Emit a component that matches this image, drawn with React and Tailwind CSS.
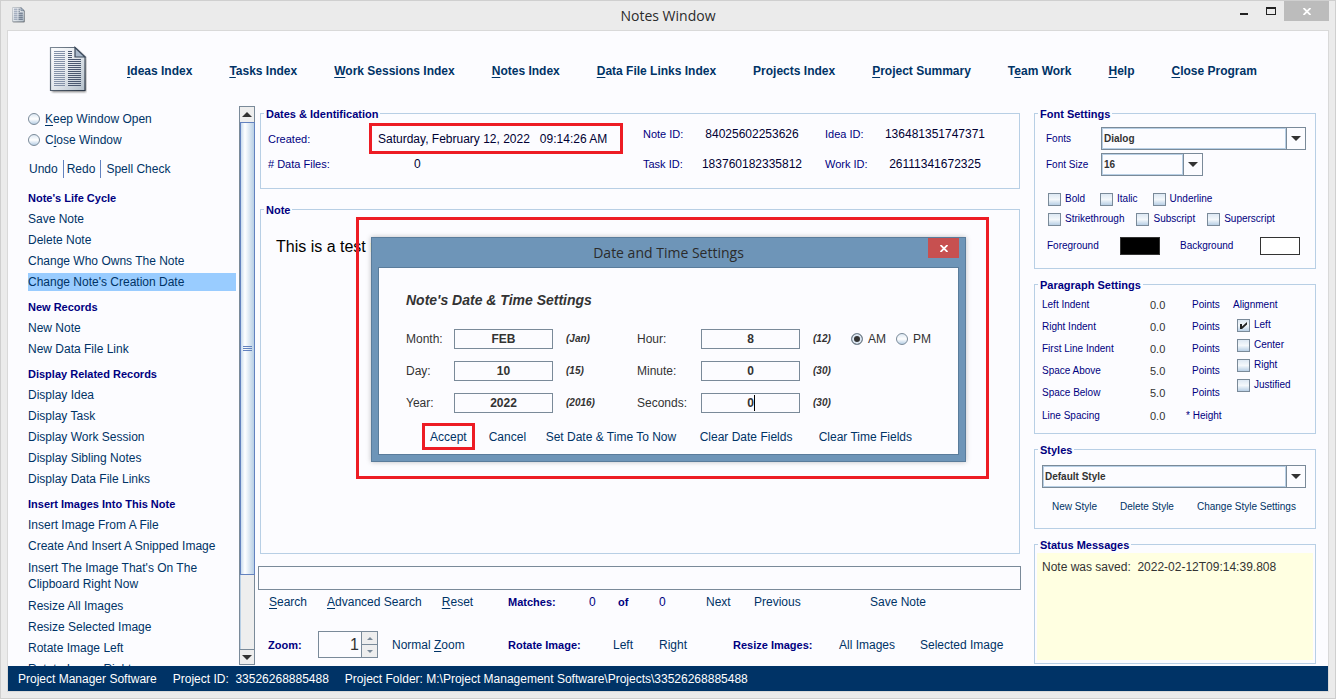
import React, { useState } from "react";

const menuItems = [
  { label: "Ideas Index", key: 0 },
  { label: "Tasks Index", key: 0 },
  { label: "Work Sessions Index", key: 0 },
  { label: "Notes Index", key: 0 },
  { label: "Data File Links Index", key: 0 },
  { label: "Projects Index", key: -1 },
  { label: "Project Summary", key: 0 },
  { label: "Team Work", key: 1 },
  { label: "Help", key: 0 },
  { label: "Close Program", key: 0 },
];

const sideSections = [
  {
    title: "Note's Life Cycle",
    links: [
      "Save Note",
      "Delete Note",
      "Change Who Owns The Note",
      "Change Note's Creation Date",
    ],
  },
  { title: "New Records", links: ["New Note", "New Data File Link"] },
  {
    title: "Display Related Records",
    links: [
      "Display Idea",
      "Display Task",
      "Display Work Session",
      "Display Sibling Notes",
      "Display Data File Links",
    ],
  },
  {
    title: "Insert Images Into This Note",
    links: [
      "Insert Image From A File",
      "Create And Insert A Snipped Image",
      "Insert The Image That's On The Clipboard Right Now",
      "Resize All Images",
      "Resize Selected Image",
      "Rotate Image Left",
      "Rotate Image Right",
    ],
  },
];

const paragraphRows = [
  ["Left Indent", "0.0", "Points"],
  ["Right Indent", "0.0", "Points"],
  ["First Line Indent", "0.0", "Points"],
  ["Space Above", "5.0", "Points"],
  ["Space Below", "5.0", "Points"],
];

// Text with one underlined shortcut letter
function Mnemonic({ text, at = 0 }) {
  if (at < 0) return text;
  return (
    <>
      {text.slice(0, at)}
      <span className="underline underline-offset-2">{text[at]}</span>
      {text.slice(at + 1)}
    </>
  );
}

// step is the distance between the printed lines, small icons need a wider one
function DocIcon({ className, step = 2 }) {
  const lines = [];
  for (let y = 5; y < 40; y += step) lines.push(y);

  return (
    <svg viewBox="0 0 38 48" className={className} aria-hidden="true">
      <defs>
        <linearGradient id="page" x1="0" y1="0" x2="1" y2="1">
          <stop offset="0" stopColor="#fdfdfe" />
          <stop offset="0.5" stopColor="#e3e8ed" />
          <stop offset="1" stopColor="#b3bfca" />
        </linearGradient>
        <linearGradient id="edge" x1="0" y1="0" x2="1" y2="1">
          <stop offset="0" stopColor="#7d8996" />
          <stop offset="1" stopColor="#2b3747" />
        </linearGradient>
        <filter id="soft" x="-20%" y="-20%" width="140%" height="140%">
          <feGaussianBlur stdDeviation="0.8" />
        </filter>
      </defs>
      <path
        d="M3 3h24l10 9v34H3z"
        fill="#222"
        opacity="0.6"
        filter="url(#soft)"
      />
      <path
        d="M1.5 1.5h24.500l10 9.500v33.500H1.500z"
        fill="url(#page)"
        stroke="url(#edge)"
        strokeWidth="1.200"
      />
      {lines.map((y) => (
        <g key={y} shapeRendering={step === 2 ? "crispEdges" : "auto"}>
          <rect x="5" y={y} width="11" height={step / 2} fill="#8391a8" />
          <rect
            x="19"
            y={y}
            width={y < 12 ? 4 : 13}
            height={step / 2}
            fill="#4a5870"
          />
        </g>
      ))}
      <path
        d="M26 1.500v9.500h10z"
        fill="#a9b9cb"
        stroke="#3c4a5c"
        strokeWidth="1.200"
      />
    </svg>
  );
}

function CloseGlyph() {
  return (
    <svg viewBox="0 0 8 7" className="w-2 h-[7px]" aria-hidden="true">
      <path d="M0.500 0L7.500 7M7.500 0L0.500 7" stroke="#fff" strokeWidth="1.800" />
    </svg>
  );
}

function Arrow({ up, small, color = "#333" }) {
  return (
    <svg
      viewBox="0 0 10 5"
      className={small ? "w-[6px] h-[3px]" : "w-[10px] h-[5px]"}
      aria-hidden="true"
    >
      <path d={up ? "M0 5L5 0L10 5z" : "M0 0h10L5 5z"} fill={color} />
    </svg>
  );
}

function Group({ title, className = "", children }) {
  return (
    <fieldset className={`border border-[#b8cfe5] min-w-0 ${className}`}>
      <legend className="ml-[3px] px-[2px] h-[18px] leading-5 text-[11px] font-bold text-[#000080]">
        {title}
      </legend>
      {children}
    </fieldset>
  );
}

function LinkButton({ className = "", children }) {
  return (
    <button
      type="button"
      className={`text-left whitespace-nowrap text-[#003366] ${className}`}
    >
      {children}
    </button>
  );
}

function Radio({ name, label, className = "", defaultChecked }) {
  return (
    <label className={`flex items-center gap-[5px] ${className}`}>
      <input
        type="radio"
        name={name}
        defaultChecked={defaultChecked}
        className="appearance-none w-3 h-3 rounded-full border border-[#7a8a99] bg-linear-to-b from-[#dde8f3] via-white to-[#b8cfe5] checked:bg-none checked:bg-[#333] checked:shadow-[inset_0_0_0_2px_#dde8f3]"
      />
      <span>{label}</span>
    </label>
  );
}

function CheckBox({ label, defaultChecked }) {
  return (
    <label className="flex items-center gap-1 text-[#000080]">
      <span className="relative flex">
        <input
          type="checkbox"
          defaultChecked={defaultChecked}
          className="peer appearance-none w-[13px] h-[13px] border border-[#7a8a99] bg-linear-to-b from-[#dde8f3] via-[#f4f8fb] to-[#b8cfe5]"
        />
        <svg
          viewBox="0 0 13 13"
          className="absolute inset-0 hidden peer-checked:block pointer-events-none"
          aria-hidden="true"
        >
          <path d="M3 5h2v2.500l5-4.500v2.500L5 10H3z" fill="#222" />
        </svg>
      </span>
      {label}
    </label>
  );
}

function ComboBox({ id, label, options, className = "" }) {
  return (
    <div className={`flex h-[23px] border border-[#7a8a99] ${className}`}>
      <select
        id={id}
        aria-label={label}
        className="appearance-none flex-1 min-w-0 border border-[#b8cfe5] px-px text-[10px] font-bold text-[#333]"
      >
        {options.map((o) => (
          <option key={o}>{o}</option>
        ))}
      </select>
      <span className="w-[19px] border-l border-[#7a8a99] flex items-center justify-center pointer-events-none">
        <Arrow />
      </span>
    </div>
  );
}

function Sidebar() {
  const [selected, setSelected] = useState("Change Note's Creation Date");

  return (
    <div className="flex w-[247px] shrink-0 pl-5">
      <div className="flex-1 min-w-0 overflow-hidden pt-[6px] mr-[3px] text-[#003366]">
        <Radio
          name="window"
          label={<Mnemonic text="Keep Window Open" />}
          className="h-[18px] mb-[3px]"
        />
        <Radio
          name="window"
          label={<Mnemonic text="Close Window" at={1} />}
          className="h-[18px]"
        />
        <div className="flex h-[18px] mt-[11px] mb-[11px]">
          <LinkButton className="pl-px pr-[5px]">Undo</LinkButton>
          <LinkButton className="border-l border-[#6382bf] pl-[3px] pr-[5px]">
            Redo
          </LinkButton>
          <LinkButton className="border-l border-[#6382bf] pl-[5px]">
            Spell Check
          </LinkButton>
        </div>
        {sideSections.map((section) => (
          <div key={section.title} className="mb-[7px]">
            <h2 className="h-[18px] mb-[3px] leading-[18px] text-[11px] font-bold text-[#000080]">
              {section.title}
            </h2>
            <ul className="flex flex-col gap-[3px]">
              {section.links.map((link) => (
                <li key={link}>
                  <button
                    type="button"
                    onClick={() => setSelected(link)}
                    className={`block w-full text-left ${
                      link.length > 40 ? "py-[2px] pr-6 leading-4" : "leading-[18px]"
                    } ${selected === link ? "bg-[#99ccff]" : ""}`}
                  >
                    {link}
                  </button>
                </li>
              ))}
            </ul>
          </div>
        ))}
      </div>

      {/* Scroll bar */}
      <div className="w-4 mt-[2px] mb-px flex flex-col border border-[#7a8a99] bg-[#eee]">
        <button
          type="button"
          aria-label="Scroll up"
          className="h-[15px] flex items-center justify-center"
        >
          <Arrow up />
        </button>
        <div className="flex-1 min-h-0 border-l border-[#b8cfe5]">
          <div className="h-[86%] -mx-px border border-[#6382bf] bg-linear-to-r from-[#c8dbee] via-white via-30% to-[#b8cfe5] flex flex-col items-center justify-center gap-px">
            <span className="w-[9px] h-px bg-[#6382bf]" />
            <span className="w-[9px] h-px bg-[#6382bf]" />
            <span className="w-[9px] h-px bg-[#6382bf]" />
          </div>
        </div>
        <button
          type="button"
          aria-label="Scroll down"
          className="h-[15px] border-t border-[#7a8a99] flex items-center justify-center"
        >
          <Arrow />
        </button>
      </div>
    </div>
  );
}

function NoteColumn() {
  return (
    <div className="flex-1 min-w-0 flex flex-col ml-[3px]">
      <Group title="Dates & Identification" className="h-[85px] ml-[2px] mr-px">
        <div className="flex pl-[7px] text-[#000033]">
          <div className="grid grid-cols-[101px_254px] grid-rows-[31px_20px] items-center mt-px">
            <span className="text-[11px] text-[#000080]">Created:</span>
            <span className="h-full flex items-center border-3 border-[#ed1c24] pl-[6px] whitespace-pre">
              {"Saturday, February 12, 2022   09:14:26 AM"}
            </span>
            <span className="text-[11px] text-[#000080]"># Data Files:</span>
            <span className="pl-[45px]">0</span>
          </div>
          <div className="grid grid-cols-[50px_118px_64px_120px] auto-rows-[24px] gap-y-[6px] items-center ml-5">
            <span className="text-[11px] text-[#000080]">Note ID:</span>
            <span className="text-center">84025602253626</span>
            <span className="pl-[14px] text-[11px] text-[#000080]">Idea ID:</span>
            <span className="text-center">136481351747371</span>
            <span className="text-[11px] text-[#000080]">Task ID:</span>
            <span className="text-center">183760182335812</span>
            <span className="pl-[14px] text-[11px] text-[#000080]">Work ID:</span>
            <span className="text-center">26111341672325</span>
          </div>
        </div>
      </Group>

      <Group title="Note" className="flex-1 ml-[2px] mr-px mt-[11px]">
        <textarea
          aria-label="Note text"
          defaultValue="This is a test note"
          className="block w-full h-full resize-none outline-none px-[15px] pt-5 text-base leading-[18px] text-black"
        />
      </Group>

      <input
        type="text"
        aria-label="Search text"
        className="h-6 mt-3 border border-[#7a8a99] px-1 outline-none"
      />

      <div className="flex items-center h-[18px] mt-[3px] pl-[11px]">
        <div className="flex w-[239px] gap-5">
          <LinkButton>
            <Mnemonic text="Search" />
          </LinkButton>
          <LinkButton>
            <Mnemonic text="Advanced Search" />
          </LinkButton>
          <LinkButton>
            <Mnemonic text="Reset" />
          </LinkButton>
        </div>
        <span className="w-[81px] text-[11px] font-bold text-[#000080]">Matches:</span>
        <span className="w-[29px] text-[#000080]">0</span>
        <span className="w-[41px] text-[11px] font-bold text-[#000080]">of</span>
        <span className="w-[47px] text-[#000080]">0</span>
        <LinkButton className="w-12">Next</LinkButton>
        <LinkButton className="w-[116px]">Previous</LinkButton>
        <LinkButton>Save Note</LinkButton>
      </div>

      <div className="flex items-center h-[27px] mt-5 mb-2 pl-[10px]">
        <div className="flex items-center w-60">
          <label htmlFor="zoom" className="w-[50px] text-[11px] font-bold text-[#000080]">
            Zoom:
          </label>
          <div className="flex w-[60px] h-[27px] mr-[14px] border border-[#7a8a99]">
            <input
              id="zoom"
              type="text"
              defaultValue="1"
              className="flex-1 min-w-0 text-right text-base text-[#333] pr-[2px] outline-none"
            />
            <div className="w-4 flex flex-col border-l border-[#7a8a99] bg-[#eee]">
              <button
                type="button"
                aria-label="Zoom in"
                className="flex-1 flex items-center justify-center border-b border-[#7a8a99]"
              >
                <Arrow up small color="#7a8a99" />
              </button>
              <button
                type="button"
                aria-label="Zoom out"
                className="flex-1 flex items-center justify-center"
              >
                <Arrow small color="#7a8a99" />
              </button>
            </div>
          </div>
          <LinkButton>
            <Mnemonic text="Normal Zoom" at={7} />
          </LinkButton>
        </div>
        <span className="w-[105px] text-[11px] font-bold text-[#000080]">
          Rotate Image:
        </span>
        <LinkButton className="w-[46px]">Left</LinkButton>
        <LinkButton className="w-[74px]">Right</LinkButton>
        <span className="w-[106px] text-[11px] font-bold text-[#000080]">
          Resize Images:
        </span>
        <LinkButton className="w-[81px]">All Images</LinkButton>
        <LinkButton>Selected Image</LinkButton>
      </div>
    </div>
  );
}

function SettingsColumn() {
  return (
    <div className="w-[282px] shrink-0 flex flex-col ml-[13px] mr-3 text-[10px] text-[#000080]">
      <Group title="Font Settings" className="h-[165px]">
        <div className="grid grid-cols-[55px_1fr] gap-y-[3px] items-center pl-[11px] pr-[9px] pt-[5px]">
          <label htmlFor="font">Fonts</label>
          <ComboBox id="font" label="Fonts" options={["Dialog", "Serif", "Monospaced"]} />
          <label htmlFor="size">Font Size</label>
          <ComboBox
            id="size"
            label="Font Size"
            options={["16", "18", "20"]}
            className="w-[102px]"
          />
        </div>
        <div className="flex gap-[15px] pl-[13px] mt-[13px] h-5">
          <CheckBox label="Bold" />
          <CheckBox label="Italic" />
          <CheckBox label="Underline" />
        </div>
        <div className="flex gap-3 pl-[13px] h-5">
          <CheckBox label="Strikethrough" />
          <CheckBox label="Subscript" />
          <CheckBox label="Superscript" />
        </div>
        <div className="flex items-center pl-3 mt-[7px] h-[19px]">
          <span className="w-[73px]">Foreground</span>
          <button
            type="button"
            aria-label="Foreground color"
            className="w-10 h-[18px] mr-5 bg-black border border-[#333]"
          />
          <span className="w-20">Background</span>
          <button
            type="button"
            aria-label="Background color"
            className="w-10 h-[18px] bg-white border border-[#333]"
          />
        </div>
      </Group>

      <Group title="Paragraph Settings" className="h-[159px] mt-[6px]">
        <div className="flex pl-[7px] pt-px">
          <div className="w-[191px]">
            {paragraphRows.map(([name, value, unit]) => (
              <div key={name} className="flex items-center h-[22px]">
                <span className="w-[108px]">{name}</span>
                <span className="w-[42px] text-[11px] text-[#333]">{value}</span>
                <span>{unit}</span>
              </div>
            ))}
            <div className="flex items-center h-6">
              <span className="w-[108px]">Line Spacing</span>
              <span className="w-9 text-[11px] text-[#333]">0.0</span>
              <span>* Height</span>
            </div>
          </div>
          <div>
            <div className="h-[21px] leading-[22px]">Alignment</div>
            <div className="grid auto-rows-[20px] pl-1">
              <CheckBox label="Left" defaultChecked />
              <CheckBox label="Center" />
              <CheckBox label="Right" />
              <CheckBox label="Justified" />
            </div>
          </div>
        </div>
      </Group>

      <Group title="Styles" className="h-[89px] mt-[6px]">
        <ComboBox
          label="Style"
          options={["Default Style", "Heading"]}
          className="ml-[7px] mr-[9px] mt-[7px]"
        />
        <div className="flex gap-[23px] pl-[17px] mt-[10px] h-[18px]">
          <LinkButton>New Style</LinkButton>
          <LinkButton>Delete Style</LinkButton>
          <LinkButton>Change Style Settings</LinkButton>
        </div>
      </Group>

      <Group title="Status Messages" className="flex-1 mt-[6px] mb-[2px]">
        <div className="h-full pb-[3px] px-[2px]">
          <div className="h-full bg-[#ffffe1] pl-[5px] pt-[5px] text-xs leading-[18px] text-[#333] whitespace-pre">
            {"Note was saved:  2022-02-12T09:14:39.808"}
          </div>
        </div>
      </Group>
    </div>
  );
}

function DateField({ id, label, value, hint, labelWidth = "w-12", caret }) {
  return (
    <div className="flex items-center h-5">
      <label htmlFor={id} className={labelWidth}>
        {label}
      </label>
      <div className="relative">
        <input
          id={id}
          type="text"
          defaultValue={value}
          className="block w-[99px] h-5 border border-[#7a8a99] text-center font-bold outline-none"
        />
        {caret && (
          <span className="absolute left-1/2 top-[2px] ml-[3px] w-px h-4 bg-black" />
        )}
      </div>
      <span className="pl-[13px] text-[10px] font-bold italic">({hint})</span>
    </div>
  );
}

function DateTimeDialog() {
  return (
    <div className="absolute left-[355px] top-[216px] w-[633px] border-3 border-[#ed1c24] pl-3 pr-5 pt-[17px] pb-[14px]">
      <div
        role="dialog"
        aria-label="Date and Time Settings"
        className="border border-[#5a7c9b] bg-[#6e95b8] px-[6px] pb-[6px] shadow-[0_0_5px_rgba(0,0,0,0.25)]"
      >
        <div className="relative flex justify-center h-[29px]">
          <h2 className="leading-[29px] font-['Open_Sans',sans-serif] text-sm/[29px] text-[#2b2b2b]">
            Date and Time Settings
          </h2>
          <button
            type="button"
            aria-label="Close dialog"
            className="absolute right-0 top-0 w-[31px] h-5 bg-[#c75050] flex items-center justify-center"
          >
            <CloseGlyph />
          </button>
        </div>

        <div className="border border-[#5a7c9b] bg-[#fcfcff] pl-[27px] pt-[23px] pb-1 text-[#333]">
          <h3 className="leading-[18px] text-sm/[18px] font-bold italic">
            Note's Date &amp; Time Settings
          </h3>
          <div className="flex mt-5">
            <div className="w-[231px] flex flex-col gap-3">
              <DateField id="month" label="Month:" value="FEB" hint="Jan" />
              <DateField id="day" label="Day:" value="10" hint="15" />
              <DateField id="year" label="Year:" value="2022" hint="2016" />
            </div>
            <div className="w-[214px] flex flex-col gap-3">
              <DateField id="hour" label="Hour:" value="8" hint="12" labelWidth="w-16" />
              <DateField id="minute" label="Minute:" value="0" hint="30" labelWidth="w-16" />
              <DateField
                id="seconds"
                label="Seconds:"
                value="0"
                hint="30"
                labelWidth="w-16"
                caret
              />
            </div>
            <div className="flex gap-[10px] h-5">
              <Radio name="ampm" label="AM" defaultChecked />
              <Radio name="ampm" label="PM" />
            </div>
          </div>
          <div className="flex items-center gap-5 mt-[10px] pl-4 h-[27px]">
            <LinkButton className="h-[27px] border-3 border-[#ed1c24] px-[5px] -mr-[6px]">
              Accept
            </LinkButton>
            <LinkButton className="w-[37px]">Cancel</LinkButton>
            <LinkButton className="w-[134px]">Set Date &amp; Time To Now</LinkButton>
            <LinkButton className="w-[99px]">Clear Date Fields</LinkButton>
            <LinkButton>Clear Time Fields</LinkButton>
          </div>
        </div>
      </div>
    </div>
  );
}

export default function App() {
  return (
    <div className="relative h-screen overflow-hidden flex flex-col border border-[#cfcfcf] bg-[#ebebeb] px-[6px] pb-[6px] font-['Liberation_Sans',Arial,sans-serif] text-xs leading-4">
      {/* Title bar */}
      <header className="relative flex justify-center h-[29px] shrink-0">
        <DocIcon step={6} className="absolute left-[5px] top-[6px] w-[13px] h-4" />
        <h1 className="font-['Open_Sans',sans-serif] text-sm/[29px] text-[#2b2b2b]">
          Notes Window
        </h1>
        <div className="absolute right-0 top-0 flex">
          <button
            type="button"
            aria-label="Minimize"
            className="w-[27px] h-5 flex items-center justify-center pt-[5px]"
          >
            <span className="w-2 h-[2px] bg-[#222]" />
          </button>
          <button
            type="button"
            aria-label="Maximize"
            className="w-[27px] h-5 flex items-center justify-center"
          >
            <span className="w-[10px] h-2 border border-t-2 border-[#222]" />
          </button>
          <button
            type="button"
            aria-label="Close"
            className="w-[45px] h-5 bg-[#bcbcbc] flex items-center justify-center"
          >
            <CloseGlyph />
          </button>
        </div>
      </header>

      <main className="flex-1 min-h-0 flex flex-col border border-[#d9d9d9] bg-[#fcfcff]">
        <nav className="flex items-center h-[73px] shrink-0 pl-[41px]">
          <DocIcon className="w-[38px] h-12 mt-1 mr-10" />
          <div className="flex gap-[37px] mt-[7px]">
            {menuItems.map((item) => (
              <a
                key={item.label}
                href="#"
                className="whitespace-nowrap font-bold text-[#003366]"
              >
                <Mnemonic text={item.label} at={item.key} />
              </a>
            ))}
          </div>
        </nav>

        <div className="flex-1 min-h-0 flex">
          <Sidebar />
          <NoteColumn />
          <SettingsColumn />
        </div>

        <footer className="flex items-center gap-4 h-[25px] shrink-0 bg-[#003366] pl-[10px] text-white whitespace-pre">
          <span>Project Manager Software</span>
          <span>{"Project ID:  33526268885488"}</span>
          <span>{"Project Folder: M:\\Project Management Software\\Projects\\33526268885488"}</span>
        </footer>
      </main>

      <DateTimeDialog />
    </div>
  );
}
